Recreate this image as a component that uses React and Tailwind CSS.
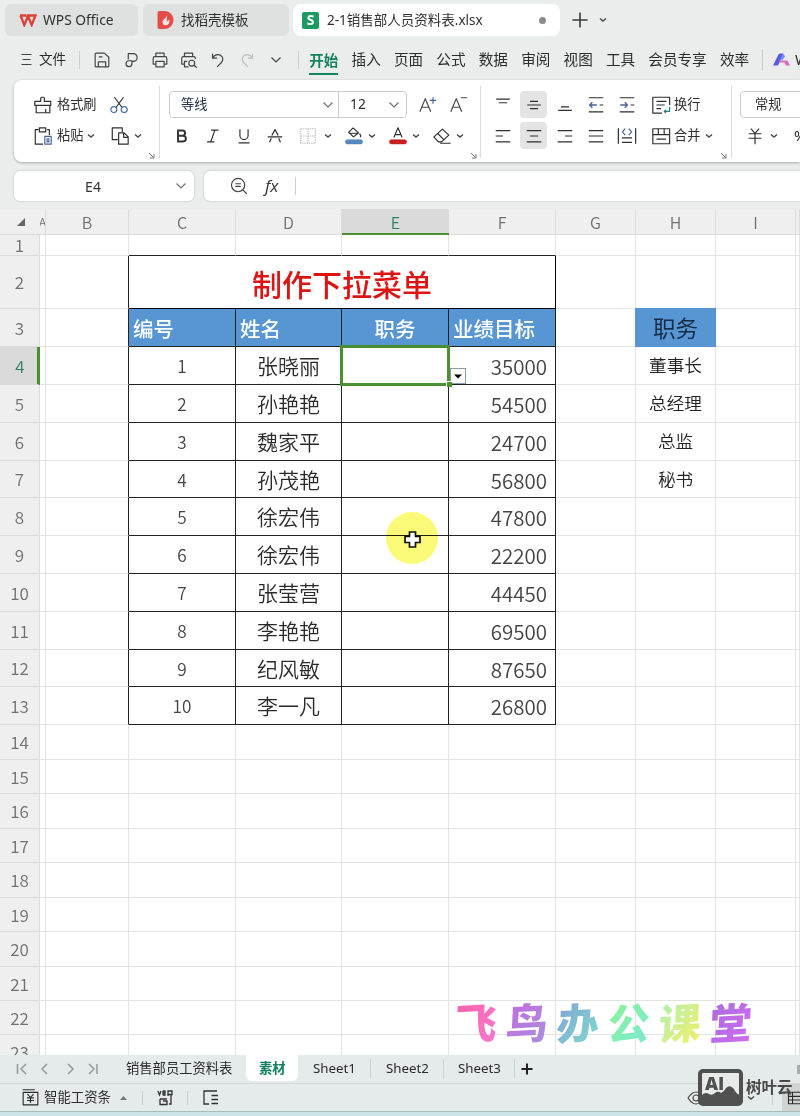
import React from 'react';

const columns = ['A', 'B', 'C', 'D', 'E', 'F', 'G', 'H', 'I', ''];

const people = [
    ['1', '张晓丽', '35000'],
    ['2', '孙艳艳', '54500'],
    ['3', '魏家平', '24700'],
    ['4', '孙茂艳', '56800'],
    ['5', '徐宏伟', '47800'],
    ['6', '徐宏伟', '22200'],
    ['7', '张莹营', '44450'],
    ['8', '李艳艳', '69500'],
    ['9', '纪风敏', '87650'],
    ['10', '李一凡', '26800']
];

const positions = ['董事长', '总经理', '总监', '秘书'];

const menuItems = ['开始', '插入', '页面', '公式', '数据', '审阅', '视图', '工具', '会员专享', '效率'];

const watermark = [
    { text: '飞', color: 'from-[#ff5fa8] to-[#f578cf]' },
    { text: '鸟', color: 'from-[#c467e0] to-[#a78fdd]' },
    { text: '办', color: 'from-[#7f9fd6] to-[#7fdccb]' },
    { text: '公', color: 'from-[#8cf58c] to-[#7ce8d4]' },
    { text: '课', color: 'from-[#a8efb4] to-[#f3ef5c]' },
    { text: '堂', color: 'from-[#a86ce0] to-[#d26af0]' }
];

// Base line icon, 20x20 grid with a 1 unit margin
const Icon = ({ size = 20, className = '', children }) => (
    <svg
        width={size}
        height={size}
        viewBox="-1 -1 22 22"
        fill="none"
        stroke="currentColor"
        strokeWidth="1.3"
        strokeLinejoin="round"
        className={`shrink-0 ${className}`}
    >
        {children}
    </svg>
);

const Slot = ({ className = '', children }) => (
    <div className={`h-[27px] shrink-0 flex items-center justify-center ${className}`}>{children}</div>
);

const Caret = () => (
    <svg width="8" height="6" viewBox="0 0 8 6" fill="none" stroke="#4a4a4a" strokeWidth="1.5" className="shrink-0">
        <path d="M1 1.5l3 2.5 3-2.5" />
    </svg>
);

const Chevron = ({ color = '#707070' }) => (
    <svg width="12" height="8" viewBox="0 0 12 8" fill="none" stroke={color} strokeWidth="1.2" className="shrink-0">
        <path d="M1.5 1.5l4.5 4.5 4.5-4.5" />
    </svg>
);

const Launcher = ({ className }) => (
    <svg width="7" height="7" viewBox="0 0 7 7" fill="none" stroke="#777" className={`absolute top-[72px] ${className}`}>
        <path d="M1 1l4.5 4.5M6 2v4H2" />
    </svg>
);

const Lines = ({ d }) => (
    <Icon>
        <path d={d} />
    </Icon>
);

const TitleBar = () => (
    <div className="h-10 shrink-0 flex items-start pt-1 pl-[5px] text-[13.5px] text-[#303030]">
        <div className="w-[133px] h-8 rounded-md bg-[#dfe0e0] flex items-center pl-[14px]">
            <svg width="18" height="13" viewBox="0 0 18 13" fill="none" stroke="#df4138" strokeWidth="2.3">
                <path d="M1 1.5h6.5M1.5 1.5l3.8 9.5L9 2l3.7 9L16.5 1.5H9.5L6.5 8" />
            </svg>
            <span className="ml-[6px] text-[13.8px]">WPS Office</span>
        </div>
        <div className="ml-[5px] w-[146px] h-8 rounded-md bg-[#dfe0e0] flex items-center pl-[14px]">
            <svg width="17" height="18" viewBox="0 0 17 18">
                <path d="M2.5 0H8a8.5 9 0 0 1 0 18H2.5A2 2 0 0 1 .5 16V2a2 2 0 0 1 2-2z" fill="#e34c47" />
                <path d="M9.5 4c1 3-4 4-4 7 0 2 1.300 3.300 3 3.300 2.800 0 4-2 4-5.300-1 0-2 .7-2.500 1.700C9 8.500 11 6 9.500 4z" fill="#fbe4e2" />
            </svg>
            <span className="ml-[7px]">找稻壳模板</span>
        </div>
        <div className="ml-1 w-[267px] h-8 rounded-lg bg-white flex items-center pl-[9px]">
            <div className="w-[17px] h-[17px] rounded-[2px] bg-[#1c9a62] text-white text-[14px] font-bold leading-none flex items-center justify-center">S</div>
            <span className="ml-2 whitespace-nowrap">2-1销售部人员资料表.xlsx</span>
            <span className="ml-auto mr-[14px] w-[7px] h-[7px] rounded-full bg-[#8c8c8c]" />
        </div>
        <div className="h-8 flex items-center ml-3 gap-[11px]">
            <svg width="16" height="16" viewBox="0 0 16 16" stroke="#3a3a3a" strokeWidth="1.6">
                <path d="M8 .5v15M.5 8h15" />
            </svg>
            <Caret />
        </div>
    </div>
);

const MenuBar = () => (
    <div className="h-[39px] shrink-0 flex items-center text-[14.6px] text-[#2c2c2c] whitespace-nowrap">
        <svg width="11" height="13" viewBox="0 0 11 13" stroke="#444" strokeWidth="1.2" className="ml-[21px] shrink-0">
            <path d="M.5 1.500h10M1.500 6.500h8M.5 11.500h10" />
        </svg>
        <span className="ml-[7px] text-[13.6px]">文件</span>
        <div className="ml-[13px] w-px h-[18px] shrink-0 bg-[#cfcfcf]" />
        <div className="ml-[12px] shrink-0 flex items-center gap-[9px] text-[#444]">
            <Icon>
                <path d="M2.500 3.500a1 1 0 0 1 1-1h9l5 4.500v9.500a1 1 0 0 1-1 1h-13a1 1 0 0 1-1-1zM6 17.500v-5.500h8v5.500M6.500 6.500h4" />
            </Icon>
            <Icon>
                <path d="M7 9.500V3h5.500a4 4 0 0 1 0 8.500H11v2.500a3.200 3.200 0 1 1-3.200-3.200h3.700" />
            </Icon>
            <Icon>
                <path d="M5.500 6V2.500h9V6M5.500 14.500h-3V8a1.800 1.800 0 0 1 1.800-1.800h11.400A1.800 1.800 0 0 1 17.500 8v6.500h-3M5.500 11.500h9v6h-9z" />
            </Icon>
            <Icon>
                <path d="M5 6V2.500h9V6M5 14.500H2V8a1.800 1.800 0 0 1 1.800-1.800h11.400A1.800 1.800 0 0 1 17 8v1M8 11.500H5v6h4.500M15.500 15.500l3 3" />
                <circle cx="13" cy="13.500" r="3.200" />
            </Icon>
            <Icon>
                <path d="M4 3v5h5M4 8c2-3.800 6-5 9-3s3 5.500.5 8L9 17.500" />
            </Icon>
            <Icon className="text-[#bdbdbd]">
                <path d="M16 3v5h-5M16 8c-2-3.800-6-5-9-3s-3 5.500-.5 8L11 17.500" />
            </Icon>
            <span className="w-5 flex justify-center"><Chevron color="#444" /></span>
        </div>
        <div className="ml-3 w-px h-[18px] shrink-0 bg-[#cfcfcf]" />
        <div className="ml-[10px] flex items-center gap-[13.2px]">
            {menuItems.map((item, i) => (
                <span
                    key={item}
                    className={i === 0 ? 'font-bold text-[#128560] border-b-2 border-[#128560] pt-[3px] leading-[25px]' : ''}
                >
                    {item}
                </span>
            ))}
        </div>
        <div className="ml-[13px] w-px h-[22px] shrink-0 bg-[#cfcfcf]" />
        <svg width="17" height="13" viewBox="0 0 17 13" className="ml-[10px] shrink-0">
            <path d="M0 12.500L5.500 1.500Q6 .5 7.500.5h3L5 12.500z" fill="#5b5be6" />
            <path d="M10 .5l2 3-3 4-1.500-2z" fill="#6f8ff2" />
            <path d="M7 7.500h7.500l2.500 5h-4l-1.500-3H6z" fill="#dc69c4" />
        </svg>
        <span className="ml-[5px]">WPS AI</span>
    </div>
);

const Ribbon = () => (
    <div className="ml-[14px] mt-px h-[82px] bg-white rounded-l-lg shadow-[0_1px_3px_rgba(0,0,0,0.28)] flex text-[13.2px] text-[#2f2f2f] whitespace-nowrap overflow-hidden">
        {/* Clipboard */}
        <div className="relative w-[146px] shrink-0 pt-[11px]">
            <div className="absolute right-0 top-[6px] h-[72px] w-px bg-[#dadada]" />
            <div className="flex pl-[19px]">
                <Slot>
                    <Icon>
                        <path d="M7.500 6V2.500a1 1 0 0 1 1-1h2a1 1 0 0 1 1 1V6h7v4.500H1V6zM2.500 10.500v8h15v-8M13 18.500V14.500" />
                    </Icon>
                </Slot>
                <Slot className="ml-1">格式刷</Slot>
                <Slot className="ml-3">
                    <Icon>
                        <path d="M5 1.500l8.500 11.500M15 1.500L6.500 13" />
                        <circle cx="4.300" cy="15" r="3.300" stroke="#4672a8" />
                        <circle cx="15.700" cy="15" r="3.300" stroke="#4672a8" />
                    </Icon>
                </Slot>
            </div>
            <div className="flex pl-[19px] mt-1">
                <Slot>
                    <Icon>
                        <path d="M5 3H1.500v16H10M14.500 3H17v6M6 1h7v4.500H6z" />
                        <path d="M12 10.500h7v8.500h-7zM14.500 13v3.500h2V13z" stroke="#48649e" />
                    </Icon>
                </Slot>
                <Slot className="ml-1">粘贴</Slot>
                <Slot className="ml-1"><Caret /></Slot>
                <Slot className="ml-[15px]">
                    <Icon>
                        <path d="M7.500 14H1.500V1h11v4.500M8.500 6.500h6l4.500 4.500V19h-10.500zM14 7v4.500h4.500" />
                    </Icon>
                </Slot>
                <Slot className="ml-[4px]"><Caret /></Slot>
            </div>
            <Launcher className="right-[5px]" />
        </div>

        {/* Font */}
        <div className="relative w-[321px] shrink-0 pt-[11px]">
            <div className="absolute right-0 top-[6px] h-[72px] w-px bg-[#dadada]" />
            <div className="flex pl-[9px]">
                <div className="w-[238px] h-[27px] border border-[#cdcdcd] rounded flex items-center">
                    <div className="w-[169px] h-full border-r border-[#cdcdcd] flex items-center justify-between pl-[11px] pr-[4px] text-[#20304a]">
                        等线 <Chevron />
                    </div>
                    <div className="flex-1 flex items-center justify-between pl-[11px] pr-[6px] text-[13.8px]">
                        12 <Chevron />
                    </div>
                </div>
                <Slot className="ml-[11px] w-5 text-[#444]">
                    <Icon>
                        <path d="M1 17.500L7 3l6 14.500M3 12.500h8" />
                        <path d="M15.500 1.500v7M12 5h7" stroke="#48649e" />
                    </Icon>
                </Slot>
                <Slot className="ml-[11px] w-5 text-[#444]">
                    <Icon>
                        <path d="M1 17.500L7 3l6 14.500M3 12.500h8M12 2h7" />
                    </Icon>
                </Slot>
            </div>
            <div className="flex pl-[6px] mt-1">
                <Slot className="w-[31px]">
                    <svg width="12" height="14" viewBox="0 0 12 14" fill="none" stroke="#333" strokeWidth="1.900">
                        <path d="M2 1.500h4.500a2.600 2.600 0 0 1 0 5.200H2h5a2.900 2.900 0 0 1 0 5.800H2z" />
                    </svg>
                </Slot>
                <Slot className="w-[31px]"><Lines d="M8 3.500h8M3.500 16.500h8M12 3.500l-4.500 13" /></Slot>
                <Slot className="w-[31px]"><Lines d="M5.500 2.500v7a4.500 4.500 0 0 0 9 0v-7M4 17.500h12" /></Slot>
                <Slot className="w-[32px]"><Lines d="M6.500 9.500L10 3l3.500 6.500M2 11h16M6 12.500l-2 4.500M14 12.500l2 4.500" /></Slot>
                <Slot className="w-[33px] text-[#bcbcbc]">
                    <Icon>
                        <path d="M2 2h16v16H2zM10 2v16M2 10h16" strokeDasharray="1.5 1" />
                    </Icon>
                </Slot>
                <Slot className="w-[7px]"><Caret /></Slot>
                <Slot className="w-5 ml-[13px]">
                    <Icon>
                        <path d="M9 1l6 5.500-5.500 4.500L4 6l5-5M4.500 7h10M16 7.500c1.500 1.500 2 3 .5 3.300" />
                        <rect x=".5" y="14" width="19" height="4.800" rx="2.200" fill="#5788bf" stroke="#4b7db8" strokeWidth=".5" />
                    </Icon>
                </Slot>
                <Slot className="w-4"><Caret /></Slot>
                <Slot className="w-5 ml-[8px]">
                    <Icon>
                        <path d="M5.500 11.500L10 1l4.500 10.500M7 8.500h6" />
                        <rect x=".5" y="14" width="19" height="4.800" rx="2.200" fill="#c81e1e" stroke="#c81e1e" strokeWidth=".5" />
                    </Icon>
                </Slot>
                <Slot className="w-[15px]"><Caret /></Slot>
                <Slot className="w-5 ml-[9px]">
                    <Icon>
                        <path d="M1 11l9.500-8.500L17.500 9l-8 7.500H6zM5.500 7.500l6.500 6.500M8 18h11.500" />
                    </Icon>
                </Slot>
                <Slot className="w-4"><Caret /></Slot>
            </div>
            <Launcher className="right-[4px]" />
        </div>

        {/* Alignment */}
        <div className="relative w-[251px] shrink-0 pt-[11px]">
            <div className="absolute right-0 top-[6px] h-[72px] w-px bg-[#dadada]" />
            <div className="flex pl-[6px]">
                <Slot className="w-[31px]"><Lines d="M2.500 3.500h15M5.500 7.500h9" /></Slot>
                <Slot className="w-[27px] mx-[2px] rounded bg-[#e4e4e4]"><Lines d="M5.500 6h9M2.500 10h15M5.500 14h9" /></Slot>
                <Slot className="w-[31px]"><Lines d="M5.500 12h9M2.500 16h15" /></Slot>
                <Slot className="w-[31px]">
                    <Icon>
                        <path d="M2 2h16M2 17.500h16M14 10h4" />
                        <path d="M11 10H3M6 7l-3 3 3 3" stroke="#48649e" strokeWidth="1.500" />
                    </Icon>
                </Slot>
                <Slot className="w-[31px]">
                    <Icon>
                        <path d="M2 2h16M2 17.500h16M14 10h4" />
                        <path d="M2.500 10h8M7.500 7l3 3-3 3" stroke="#48649e" strokeWidth="1.500" />
                    </Icon>
                </Slot>
                <Slot className="w-5 ml-[9px]">
                    <Icon>
                        <path d="M11 19H1V1.500h18.500V10M5 6h11M5 10h9M5 14h5" />
                        <path d="M19.500 12v5h-6M15.500 15l-2 2 2 2" stroke="#287c85" />
                    </Icon>
                </Slot>
                <Slot className="ml-[3px]">换行</Slot>
            </div>
            <div className="flex pl-[6px] mt-1">
                <Slot className="w-[31px]"><Lines d="M2 4h16M2 10h8M2 16.500h16" /></Slot>
                <Slot className="w-[27px] mx-[2px] rounded bg-[#e4e4e4]"><Lines d="M2 4h16M5.500 10h9M2 16.500h16" /></Slot>
                <Slot className="w-[31px]"><Lines d="M2 4h16M10 10h8M2 16.500h16" /></Slot>
                <Slot className="w-[31px]"><Lines d="M2 4h16M2 10h16M2 16.500h16" /></Slot>
                <Slot className="w-[31px]">
                    <Icon>
                        <path d="M.5 1.500v17M19.500 1.500v17M4.500 12h11M4.500 17h11" />
                        <path d="M8 2L5 5.500 8 9M12 2l3 3.500L12 9" stroke="#48649e" />
                    </Icon>
                </Slot>
                <Slot className="w-5 ml-[9px]">
                    <Icon>
                        <path d="M1 2h18.500v16.500H1zM1 8.500h18.500M7 2v6.500M13.500 2v6.500M5 13.500h10.500" />
                    </Icon>
                </Slot>
                <Slot className="ml-[3px]">合并</Slot>
                <Slot className="ml-[5px]"><Caret /></Slot>
            </div>
            <Launcher className="right-[5px]" />
        </div>

        {/* Number format */}
        <div className="w-[200px] shrink-0 pt-[11px] pl-2">
            <div className="h-[27px] border border-[#cdcdcd] rounded flex items-center pl-[14px]">常规</div>
            <div className="flex mt-1 pl-[5px]">
                <Slot className="w-5"><Lines d="M5.500 2L10 7l4.500-5M3 7.500h14M3 12.500h14M10 7v12" /></Slot>
                <Slot className="w-4 ml-[1px]"><Caret /></Slot>
                <Slot className="ml-[12px] text-[15px]">%</Slot>
            </div>
        </div>
    </div>
);

const FormulaBar = () => (
    <div className="ml-[14px] mt-[9px] h-[30px] shrink-0 flex text-[#333]">
        <div className="w-[180px] bg-white rounded-md shadow-[0_0_2px_rgba(0,0,0,0.25)] flex items-center pr-[7px]">
            <span className="flex-1 text-center pr-[3px] text-[14px]">E4</span>
            <Chevron />
        </div>
        <div className="ml-[10px] flex-1 bg-white rounded-l-md shadow-[0_0_2px_rgba(0,0,0,0.25)] flex items-center pl-[25px]">
            <Icon className="text-[#444]">
                <circle cx="9" cy="9" r="7.300" />
                <path d="M14.500 14.500l4 4M6 7.500h6M6 10.500h6" />
            </Icon>
            <span className="ml-[16px] w-[18px] text-[17px] italic font-['Open_Sans','Noto_Sans',sans-serif]">fx</span>
            <div className="ml-[12px] w-px h-[18px] bg-[#cfcfcf]" />
        </div>
    </div>
);

const Cell = ({ row, col }) => {
    const inTable = row >= 2 && row <= 13;
    const header = row === 3;
    const person = people[row - 4];

    // row 2 of the table is merged over C:F
    if (row === 2 && col === 'C') {
        return (
            <div className="col-span-4 border-r border-b border-black bg-white flex items-center justify-center pt-[3px] text-[30px] font-medium text-[#dc1414]">
                制作下拉菜单
            </div>
        );
    }
    if (row === 2 && 'DEF'.includes(col) && col) return null;

    const tableCol = col && 'CDEF'.includes(col);
    const right = inTable && (tableCol || col === 'B') ? 'border-r-[#222]' : 'border-r-[#e3e3e3]';
    const bottom = tableCol && row <= 13 ? 'border-b-[#222]' : 'border-b-[#e3e3e3]';

    let look = 'bg-white';
    let text = '';
    if (header && tableCol) {
        look = 'bg-[#5796d3] text-white font-medium text-[20.5px] pl-1 pt-[2px] justify-start';
        if (col === 'E') look = 'bg-[#5796d3] text-white font-medium text-[20.5px] pt-[2px] justify-center';
        text = { C: '编号', D: '姓名', E: '职务', F: '业绩目标' }[col];
    } else if (header && col === 'H') {
        return (
            <div className="relative -ml-px -mt-px bg-[#5796d3] text-[#152c44] text-[22.5px] flex items-center justify-center">职务</div>
        );
    } else if (person && col === 'C') {
        look = 'bg-white justify-center font-[350] text-[17.2px] text-[#444] pt-px';
        text = person[0];
    } else if (person && col === 'D') {
        look = 'bg-white justify-center font-[350] text-[21px] text-[#2a2a2a] pt-px';
        text = person[1];
    } else if (person && col === 'F') {
        look = 'bg-white justify-end pr-[8px] font-[350] text-[20.5px] text-[#444] pt-[2px]';
        text = person[2];
    } else if (col === 'H' && positions[row - 4]) {
        look = 'bg-white justify-center font-[350] text-[17.6px] text-[#222]';
        text = positions[row - 4];
    }

    return (
        <div className={`relative border-r border-b ${right} ${bottom} flex items-center whitespace-nowrap ${look}`}>
            {text}
            {row === 4 && col === 'E' && (
                <>
                    <div className="absolute -left-[2px] -top-[2px] -right-[2px] -bottom-[2px] z-10 border-[3px] border-[#4a8f31]" />
                    <div className="absolute -right-[4px] -bottom-[3px] z-20 w-[6px] h-[6px] bg-[#4a8f31] border-l border-t border-white" />
                    <div className="absolute -right-[18px] bottom-0 z-10 w-4 h-4 border border-[#8d9aa8] bg-white flex items-center justify-center">
                        <svg width="8" height="5" viewBox="0 0 8 5"><path d="M0 .5h8L4 4.500z" fill="#000" /></svg>
                    </div>
                </>
            )}
            {row === 9 && col === 'E' && (
                <>
                    <div className="absolute left-[44px] -top-[24px] z-20 w-[52px] h-[52px] rounded-full bg-[#fbfa78] mix-blend-multiply" />
                    <svg width="17" height="17" viewBox="0 0 17 17" className="absolute left-[62px] -top-[5px] z-20">
                        <path d="M5.500 1h6v4.500H16v6h-4.500V16h-6v-4.500H1v-6h4.500z" fill="#fff" stroke="#111" strokeWidth="1.700" />
                    </svg>
                </>
            )}
        </div>
    );
};

const Sheet = () => (
    <div className="relative mt-2 h-[846px] shrink-0 overflow-hidden bg-[#efefef]">
        <div className="grid grid-cols-[40px_6px_83px_107px_106px_107px_107px_80px_80px_80px_4px] grid-rows-[26px_21px_53px_38px_38px_38px_38px_37px_38px_38px_38px_38px_37px_38px_35px_34px_35px_34px_35px_34px_35px_34px_34px_35px]">
            <div className="border-b border-[#d9d9d9] flex items-center justify-end pr-[15px]">
                <svg width="8" height="8" viewBox="0 0 8 8"><path d="M8 0v8H0z" fill="#666" /></svg>
            </div>
            {columns.map((col, i) => (
                <div
                    key={i}
                    className={
                        col === 'E'
                            ? 'bg-[#dadada] border-b-2 border-[#4a8f31] text-[#2d8068] text-[16px] font-[350] flex items-center justify-center pt-[2px]'
                            : 'border-b border-r border-[#dcdcdc] text-[#707070] text-[16px] font-[350] flex items-center justify-center overflow-hidden'
                    }
                >
                    {col === 'A' ? <span className="text-[11px]">A</span> : col}
                </div>
            ))}
            {Array.from({ length: 23 }, (_, i) => i + 1).map((row) => (
                <React.Fragment key={row}>
                    <div
                        className={
                            row === 4
                                ? 'bg-[#dadada] border-r-[3px] border-[#4a8f31] border-b border-b-[#d9d9d9] text-[#2d8068] text-[17px] font-[350] flex items-center justify-center pl-[3px]'
                                : 'border-b border-r border-[#dcdcdc] text-[#707070] text-[17px] font-[350] flex items-center justify-center'
                        }
                    >
                        {row}
                    </div>
                    {columns.map((col, i) => (
                        <Cell key={i} row={row} col={col} />
                    ))}
                </React.Fragment>
            ))}
        </div>

        {/* Course signature floating over the cells */}
        <div className="absolute left-[455px] top-[786px] z-30 flex gap-[9px]">
            {watermark.map((item) => (
                <span
                    key={item.text}
                    className={`w-[42px] text-[42px] leading-[52px] font-black -skew-x-6 -rotate-3 bg-linear-to-br bg-clip-text text-transparent ${item.color}`}
                >
                    {item.text}
                </span>
            ))}
        </div>
    </div>
);

const SheetTabs = () => (
    <div className="h-[29px] shrink-0 flex items-center bg-[#e5ebea] border-b border-[#d2d8d7] text-[13.3px] text-[#2b2b2b] whitespace-nowrap">
        <svg width="82" height="12" viewBox="0 0 82 12" fill="none" stroke="#929a99" strokeWidth="1.500" className="ml-4 shrink-0">
            <path d="M1.500 1v10M10 1L5 6l5 5M31 1l-5 5 5 5M52 1l5 5-5 5M73 1l5 5-5 5M81 1v10" />
        </svg>
        <span className="ml-[28px]">销售部员工资料表</span>
        <div className="ml-[14px] w-[52px] h-[26px] self-start bg-white rounded-b-md flex items-center justify-center pt-[2px] font-bold text-[#12805e]">素材</div>
        <span className="w-[73px] text-center border-r border-[#cdd2d1]">Sheet1</span>
        <span className="w-[73px] text-center border-r border-[#cdd2d1]">Sheet2</span>
        <span className="w-[71px] text-center border-r border-[#cdd2d1]">Sheet3</span>
        <svg width="12" height="12" viewBox="0 0 12 12" stroke="#222" strokeWidth="2" className="ml-[6px]">
            <path d="M6 .5v11M.5 6h11" />
        </svg>
        <div className="ml-auto w-[3px] h-[9px] bg-[#a8adac]" />
    </div>
);

const StatusBar = () => (
    <div className="h-[27px] shrink-0 flex items-center bg-[#e5ebea] text-[13.4px] text-[#2b2b2b] whitespace-nowrap">
        <Icon size={19} className="ml-[21px]">
            <path d="M1 1h14M1.500 4h17v14.500h-17zM6.500 6l3.500 4 3.500-4M6 10.500h8M6 13.500h8M10 10v6.500" />
        </Icon>
        <span className="ml-[4px]">智能工资条</span>
        <svg width="7" height="4" viewBox="0 0 7 4" className="ml-[9px]"><path d="M0 4L3.500 0 7 4z" fill="#777" /></svg>
        <div className="ml-[15px] w-px h-[14px] bg-[#c9cfce]" />
        <svg width="17" height="16" viewBox="0 0 17 16" fill="none" stroke="#333" strokeWidth="1.300" className="ml-[14px]">
            <path d="M1 1l1.500 4L4 1M6 .8v4.400M6 1h2v4H6M6 3h2M11 6V1h4v3.500h-4M14 4.500V14h-2M3 9h7M3 9v5.500h7V11H6" />
        </svg>
        <div className="ml-[13px] w-px h-[14px] bg-[#c9cfce]" />
        <svg width="15" height="15" viewBox="0 0 15 15" fill="none" stroke="#333" strokeWidth="1.300" className="ml-[15px]">
            <path d="M14 1H1v13h5M8.500 5.500H15M8.500 9.500H15M8.500 13.500H15" />
        </svg>
        <svg width="18" height="14" viewBox="0 0 18 14" fill="none" stroke="#444" strokeWidth="1.200" className="ml-auto">
            <path d="M1 7q8-12 16 0-8 12-16 0z" />
            <circle cx="9" cy="7" r="3" />
        </svg>
        <span className="ml-[42px]"><Caret /></span>
        <div className="ml-[17px] w-px h-[14px] bg-[#c9cfce]" />
        <div className="ml-[9px] w-[18px] h-full shrink-0 overflow-hidden bg-[#d0d5d4] flex items-center pl-1">
            <Icon size={18}>
                <path d="M2 3h16v14H2zM2 8h16M2 12.500h16M7 3v14" />
            </Icon>
        </div>
    </div>
);

const Brand = () => (
    <div className="absolute left-[698px] top-[1069px] z-40 flex items-center text-[#484848]">
        <svg width="45" height="37" viewBox="0 0 45 37">
            <rect x="2" y="2" width="41" height="33" rx="3" fill="#e6ebea" stroke="#505050" strokeWidth="4" />
            <text x="7" y="21" fontSize="18" fontWeight="800" fill="#505050" fontFamily="Open Sans, Noto Sans, sans-serif">AI</text>
            <path d="M3 35V27q4-5 8-2 3 2 6-1t6 0q3-1 5-5 4-4 8 1 2 5 6 6v9z" fill="#505050" />
        </svg>
        <span className="ml-[3px] text-[15.5px] font-bold whitespace-nowrap">树叶云</span>
    </div>
);

const App = () => {
    return (
        <div className="relative w-[800px] h-[1116px] overflow-hidden flex flex-col bg-[#ebecec] font-['Noto_Sans','Noto_Sans_CJK_SC',sans-serif]">
            <TitleBar />
            <MenuBar />
            <div className="shrink-0"><Ribbon /></div>
            <FormulaBar />
            <div className="font-['Noto_Sans_CJK_SC',sans-serif]"><Sheet /></div>
            <SheetTabs />
            <StatusBar />
            <div className="flex-1 bg-[#cbe3e6] border-t border-[#a9bcbc]" />
            <Brand />
        </div>
    );
};

export default App;
